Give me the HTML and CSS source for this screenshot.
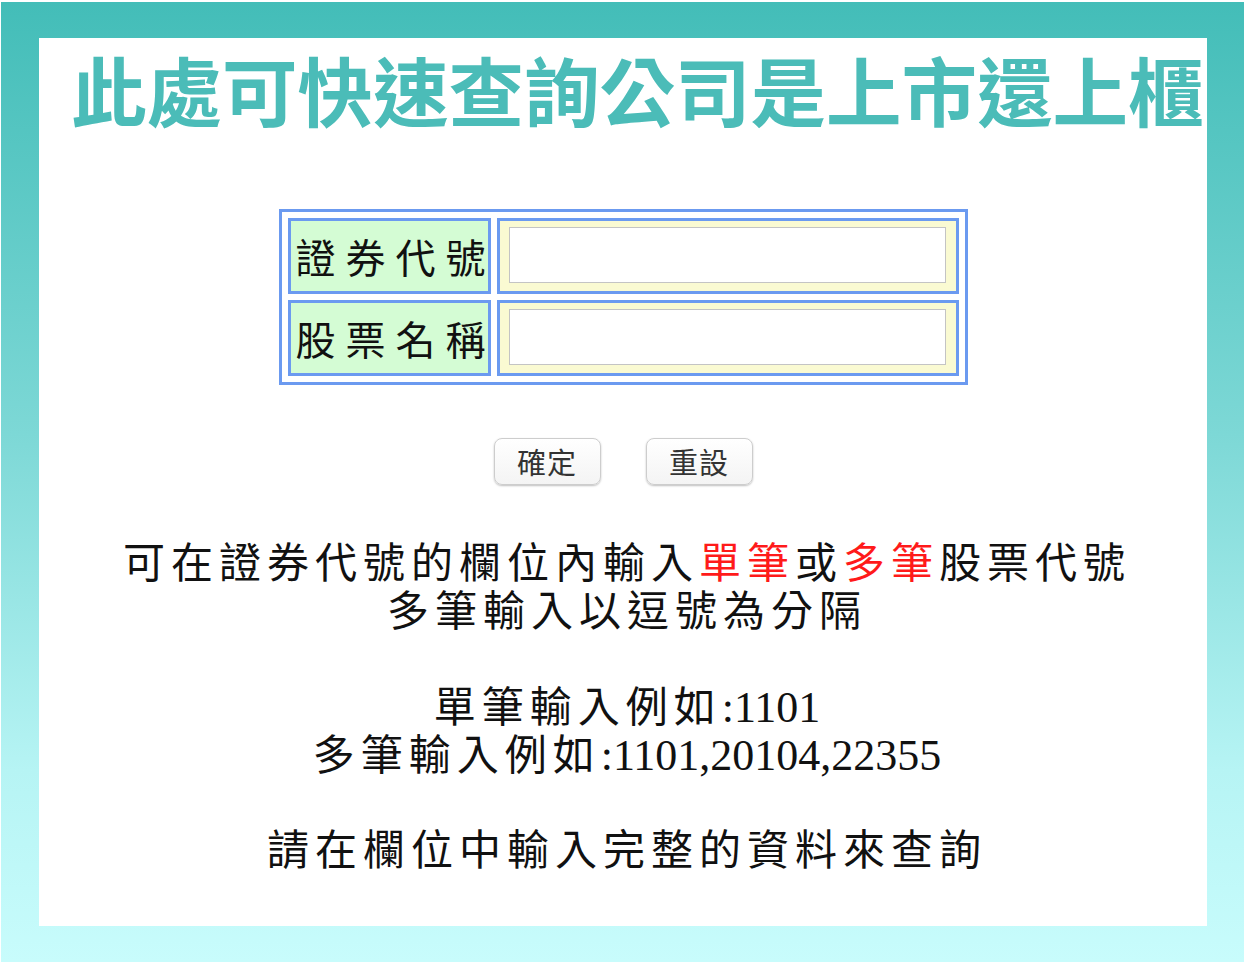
FILE: index.html
```html
<!DOCTYPE html>
<html lang="zh-Hant">
<head>
<meta charset="utf-8">
<title>上市上櫃查詢</title>
<link rel="stylesheet" href="styles.css">
</head>
<body>
<div class="frame">
  <div class="panel">
    <h1 class="title">此處可快速查詢公司是上市還上櫃</h1>
    <form class="query">
      <table class="grid">
        <tr>
          <td class="label"><span class="label-text">證券代號</span></td>
          <td class="field"><input type="text" class="box"></td>
        </tr>
        <tr>
          <td class="label"><span class="label-text">股票名稱</span></td>
          <td class="field"><input type="text" class="box"></td>
        </tr>
      </table>
      <div class="actions">
        <button type="button" class="btn">確定</button>
        <button type="reset" class="btn">重設</button>
      </div>
    </form>
    <div class="notes">
      <p class="line">可在證券代號的欄位內輸入<span class="red">單筆</span>或<span class="red">多筆</span>股票代號</p>
      <p class="line">多筆輸入以逗號為分隔</p>
      <p class="line blank">&nbsp;</p>
      <p class="line">單筆輸入例如<span class="num">:1101</span></p>
      <p class="line">多筆輸入例如<span class="num">:1101,20104,22355</span></p>
      <p class="line blank">&nbsp;</p>
      <p class="line">請在欄位中輸入完整的資料來查詢</p>
    </div>
  </div>
</div>
</body>
</html>
```
FILE: styles.css
```css
html, body {
  margin: 0;
  padding: 0;
  background: #ffffff;
}
body {
  font-family: "Noto Sans CJK TC", "Noto Sans", sans-serif;
}
.frame {
  margin: 2px 0 0 1px;
  width: 1243px;
  height: 960px;
  box-sizing: border-box;
  padding: 36px 37px 36px 38px;
  background: linear-gradient(to bottom, #43bdb8 0%, #7dd8d6 45%, #b6f4f4 80%, #c8fcfc 100%);
}
.panel {
  width: 1168px;
  height: 888px;
  background: #ffffff;
  display: flex;
  flex-direction: column;
  align-items: center;
}
.title {
  align-self: stretch;
  margin: 10px 0 0 0;
  padding-left: 32px;
  font-family: "Noto Sans CJK TC", sans-serif;
  font-weight: 700;
  font-size: 75.5px;
  line-height: 80px;
  height: 80px;
  color: #4bbcb8;
  white-space: nowrap;
}
.query {
  margin: 81px 0 0 0;
  display: flex;
  flex-direction: column;
  align-items: center;
}
.grid {
  border: 3px solid #6b9af0;
  border-spacing: 6px;
  width: 689px;
  table-layout: fixed;
}
.label {
  width: 203px;
  height: 76px;
  box-sizing: border-box;
  border: 3px solid #6b9af0;
  background: #d4fcd4;
  padding: 0 0 0 5px;
  font-family: "Noto Sans CJK TC", serif;
  font-size: 40px;
  color: #111;
  white-space: nowrap;
  vertical-align: middle;
  overflow: visible;
}
.label-text {
  letter-spacing: 10px;
  margin-right: -10px;
}
.field {
  border: 3px solid #6b9af0;
  background: #fafad2;
  padding: 6px 10px 8px 9px;
  vertical-align: middle;
}
.box {
  display: block;
  width: 100%;
  height: 56px;
  box-sizing: border-box;
  border: 1px solid #c4c4c4;
  background: #ffffff;
  margin: 0;
}
.actions {
  margin-top: 53px;
  display: flex;
  gap: 45px;
}
.btn {
  width: 107px;
  height: 47px;
  border: 1px solid #cdcdcd;
  border-radius: 8px;
  background: linear-gradient(to bottom, #ffffff, #f4f4f4);
  box-shadow: 0 1px 2px rgba(0, 0, 0, 0.25);
  font-family: "Noto Sans CJK TC", sans-serif;
  font-size: 29px;
  line-height: 1;
  color: #333;
  padding: 0;
  letter-spacing: 1px;
}
.notes {
  margin-top: 56px;
  text-align: center;
}
.line {
  margin: 0;
  padding-left: 8px;
  font-family: "Liberation Serif", "Noto Sans CJK TC", serif;
  font-size: 42px;
  line-height: 47.5px;
  letter-spacing: 6px;
  color: #111;
  white-space: nowrap;
}
.red {
  color: #ff1a1a;
}
.num {
  font-size: 44px;
  letter-spacing: 0;
}
```
